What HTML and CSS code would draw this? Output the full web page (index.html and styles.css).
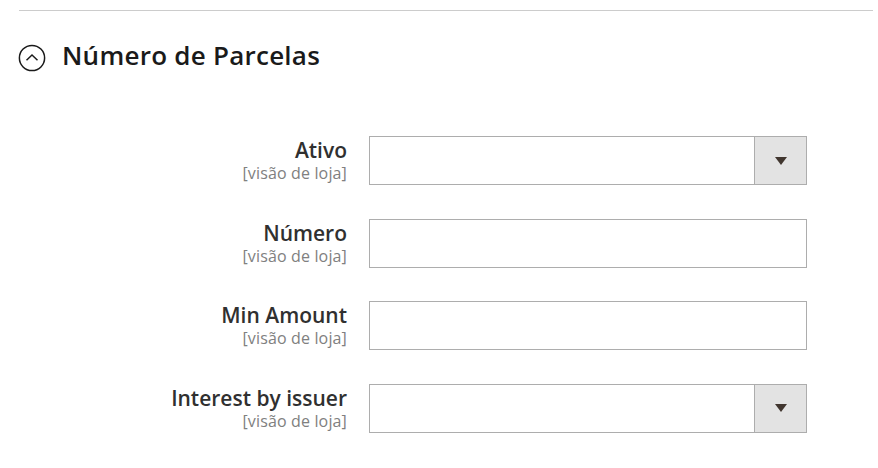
FILE: index.html
```html
<!DOCTYPE html>
<html lang="pt">
<head>
<meta charset="utf-8">
<link rel="stylesheet" href="styles.css">
</head>
<body>
<div class="section">
  <div class="section-head">
    <span class="toggle">
      <svg width="28" height="28" viewBox="0 0 28 28"><circle cx="14" cy="14" r="12.6" fill="none" stroke="#1a1a1a" stroke-width="1.5"/><path d="M8.5 16.2 L14 11 L19.5 16.2" fill="none" stroke="#1a1a1a" stroke-width="1.5"/></svg>
    </span>
    <h2 class="title">Número de Parcelas</h2>
  </div>
  <div class="form">
    <div class="row">
      <div class="label"><span class="name">Ativo</span><span class="scope">[visão de loja]</span></div>
      <div class="control select"><span class="arrow"></span></div>
    </div>
    <div class="row">
      <div class="label"><span class="name">Número</span><span class="scope">[visão de loja]</span></div>
      <div class="control"></div>
    </div>
    <div class="row">
      <div class="label"><span class="name">Min Amount</span><span class="scope">[visão de loja]</span></div>
      <div class="control"></div>
    </div>
    <div class="row">
      <div class="label"><span class="name">Interest by issuer</span><span class="scope">[visão de loja]</span></div>
      <div class="control select"><span class="arrow"></span></div>
    </div>
  </div>
</div>
</body>
</html>
```
FILE: styles.css
```css
html, body { margin: 0; padding: 0; background: #fff; }
body { font-family: "Open Sans", "Liberation Sans", sans-serif; color: #303030; }
.section { margin: 10px 5px 0 19px; border-top: 1px solid #cccccc; }
.section-head { display: flex; align-items: center; height: 90px; box-sizing: border-box; padding-bottom: 2px; }
.toggle { display: flex; width: 28px; height: 28px; margin-left: -1px; margin-right: 16px; margin-top: 6px; }
.title { margin: 0; font-size: 26px; font-weight: 600; color: #1a1a1a; letter-spacing: 0.25px; }
.form { padding-top: 35px; display: flex; flex-direction: column; gap: 33.67px; }
.row { display: flex; align-items: flex-start; }
.label { width: 328px; display: flex; flex-direction: column; align-items: flex-end; }
.name { font-size: 21px; font-weight: 600; line-height: 28px; color: #303030; }
.scope { font-size: 16px; color: #808080; line-height: 18px; letter-spacing: 0.15px; }
.control { margin-left: 22px; width: 438px; height: 49px; box-sizing: border-box; border: 1px solid #adadad; background: #fff; position: relative; }
.select .arrow { position: absolute; right: 0; top: 0; bottom: 0; width: 51px; background: #e3e3e3; border-left: 1px solid #adadad; display: flex; align-items: center; justify-content: center; }
.select .arrow::after { content: ""; width: 0; height: 0; border-left: 6px solid transparent; border-right: 6px solid transparent; border-top: 8px solid #41362f; }
```
